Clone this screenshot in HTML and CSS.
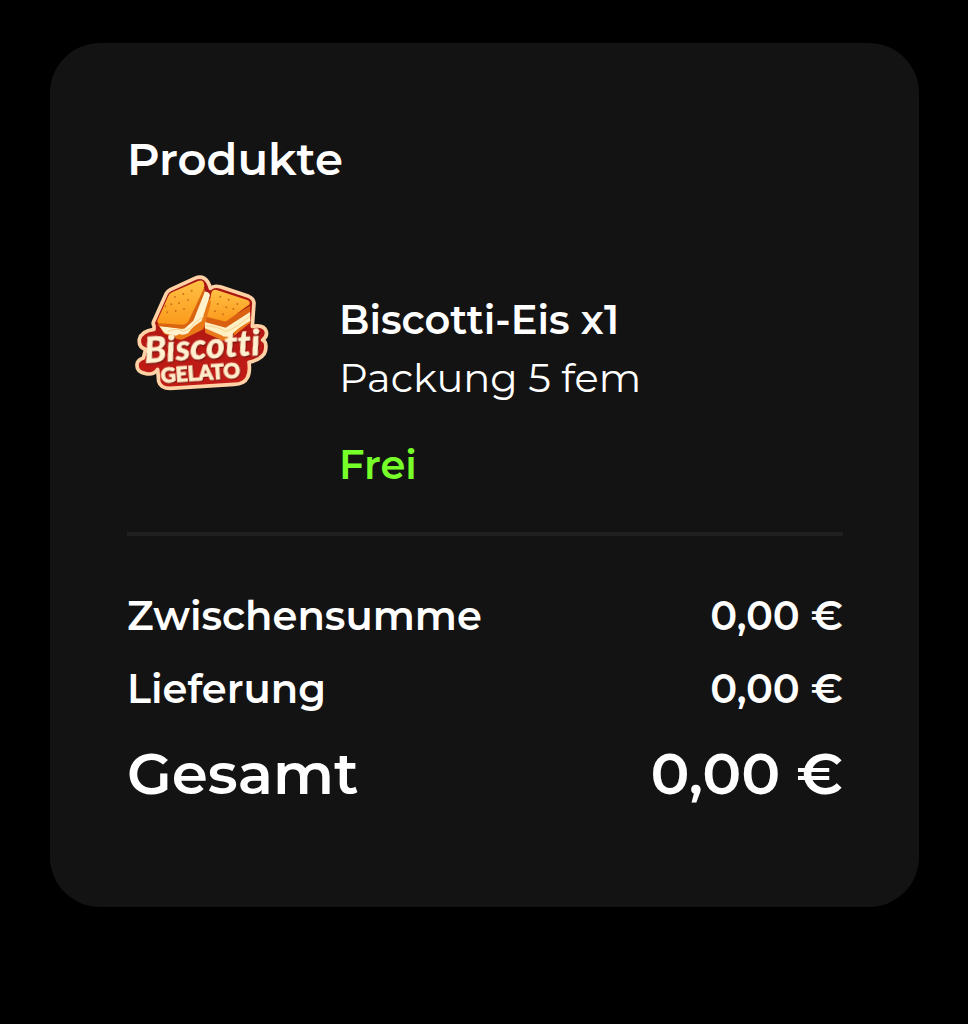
FILE: index.html
```html
<!DOCTYPE html>
<html lang="de">
<head>
<meta charset="utf-8">
<meta name="viewport" content="width=device-width, initial-scale=1">
<title>Produkte</title>
<link rel="stylesheet" href="styles.css">
</head>
<body>
<main class="card">
  <h1 class="title">Produkte</h1>
  <article class="item">
    <svg class="logo" viewBox="21 36 432 366" role="img" aria-label="Biscotti Gelato">
      <defs>
        <linearGradient id="top" x1="0" y1="0" x2="0" y2="1"><stop offset="0" stop-color="#ffc044"/><stop offset="1" stop-color="#fb9a1c"/></linearGradient>
        <linearGradient id="red" x1="0" y1="0" x2="0" y2="1"><stop offset="0" stop-color="#a51710"/><stop offset="1" stop-color="#c41c16"/></linearGradient>
        <path id="badge" d="M102 194 Q97 188 102 179 L139 97 Q143 90 151 86 L224 52 Q241 45 253 52 Q265 59 271 82 Q281 72 303 78 L386 106 Q401 112 402 126 L397 196 Q431 190 438 209 Q444 224 428 237 Q442 243 436 270 Q431 292 387 304 Q391 335 382 350 Q373 369 342 370 L151 382 Q121 382 116 361 L113 325 Q101 343 78 338 Q50 334 51 313 Q50 298 70 291 L77 265 Q55 259 58 235 Q64 210 102 205 Z"/>
      </defs>
      <use href="#badge" fill="url(#red)" stroke="#ffd2a6" stroke-width="11" stroke-linejoin="round"/>
      <path d="M253 188 L262 141 L390 164 L391 185 L326 237 Q310 243 300 235 L256 216 Z" fill="#e9791a"/>
      <path d="M254 180 Q284 184 316 197 L390 151 L391 180 Q355 199 332 224 Q317 232 303 222 L255 202 Z" fill="#fff0c4"/>
      <path d="M257 194 Q291 195 315 211 Q338 209 390 165" fill="none" stroke="#f5d08c" stroke-width="3"/>
      <path d="M315 180 L390 134 L390 153 L317 200 L257 184 L257 164 Z" fill="#d96110"/>
      <path d="M275 92 Q280 85 290 87 L384 118 Q391 122 389 130 L321 179 Q317 183 309 180 L259 167 Z" fill="url(#top)"/>
      <path d="M114 190 L143 116 L269 113 Q277 119 266 150 L250 205 L189 235 Q176 239 159 229 L132 218 Z" fill="#e97916"/>
      <path d="M118 195 L188 204 L251 91 Q269 93 270 103 L245 180 Q215 198 205 216 Q190 224 178 219 Q165 230 154 219 Q137 222 129 210 Z" fill="#fff2cc"/>
      <path d="M143 211 Q175 199 190 211 Q213 205 222 187 L251 167" fill="none" stroke="#f5d08c" stroke-width="3"/>
      <path d="M187 188 L247 78 Q257 77 253 96 L220 179 L193 203 L116 195 L112 181 Z" fill="#da6510"/>
      <path d="M145 105 Q148 97 156 94 L234 60 Q250 55 252 68 Q255 74 251 83 L207 177 Q201 190 188 191 L119 187 Q109 184 114 174 Z" fill="url(#top)"/>
      <g fill="#d0701a">
        <circle cx="165" cy="108" r="3"/><circle cx="190" cy="99" r="3"/><circle cx="215" cy="89" r="3"/>
        <circle cx="154" cy="130" r="3"/><circle cx="177" cy="126" r="3"/><circle cx="204" cy="117" r="3"/>
        <circle cx="142" cy="154" r="3"/><circle cx="167" cy="150" r="3"/><circle cx="192" cy="144" r="3"/>
        <circle cx="136" cy="136" r="3"/>
        <circle cx="301" cy="107" r="3"/><circle cx="326" cy="116" r="3"/><circle cx="352" cy="129" r="3"/>
        <circle cx="293" cy="129" r="3"/><circle cx="319" cy="139" r="3"/><circle cx="340" cy="144" r="3"/>
        <circle cx="285" cy="151" r="3"/><circle cx="309" cy="160" r="3"/>
      </g>
      <g transform="rotate(-4 80 313)">
        <text class="logo-script" x="76" y="306">Biscotti</text>
      </g>
      <g transform="rotate(-4 125 364)">
        <text class="logo-caps" x="124" y="366">GELATO</text>
      </g>
    </svg>
    <div class="details">
      <h2 class="name">Biscotti-Eis x1</h2>
      <p class="variant">Packung 5 fem</p>
      <p class="price">Frei</p>
    </div>
  </article>
  <dl class="totals">
    <div class="row"><dt>Zwischensumme</dt><dd>0,00 €</dd></div>
    <div class="row"><dt>Lieferung</dt><dd>0,00 €</dd></div>
    <div class="row grand"><dt>Gesamt</dt><dd>0,00 €</dd></div>
  </dl>
</main>
</body>
</html>
```
FILE: styles.css
```css
* {
  box-sizing: border-box;
  margin: 0;
}
body {
  padding: 43px 49px 43px 50px;
  background: #000;
  color: #fff;
  font-family: Montserrat, Inter, sans-serif;
  font-size: 40px;
}
.card {
  padding: 88px 76px 84px 77px;
  border-radius: 50px;
  background: #131313;
}
.title {
  font-size: 45px;
  font-weight: 600;
  line-height: 56px;
}
.item {
  display: flex;
  gap: 68px;
  margin-top: 86px;
}
.logo {
  flex: none;
  width: 144px;
  height: 122px;
}
.details {
  padding-top: 18px;
  line-height: 58px;
}
.name {
  font-size: 40px;
  font-weight: 600;
}
.variant {
  font-weight: 400;
}
.price {
  margin-top: 29px;
  color: #77ff29;
  font-weight: 600;
}
.totals {
  margin-top: 38px;
  padding-top: 43px;
  border-top: 4px solid #202020;
  font-weight: 600;
  line-height: 73px;
}
.row {
  display: flex;
  justify-content: space-between;
}
.grand {
  font-size: 58px;
  line-height: 98px;
}
.logo-script {
  fill: #fff0d0;
  stroke: #fff0d0;
  stroke-width: 1px;
  filter: drop-shadow(2px 4px 1px #7b100b);
  font-family: Lato, sans-serif;
  font-size: 108px;
  font-style: italic;
  font-weight: 900;
  font-variant-ligatures: none;
}
.logo-caps {
  fill: #ffedca;
  stroke: #ffedca;
  stroke-width: 3px;
  filter: drop-shadow(2px 3px 1px #7b100b);
  font-family: Lato, sans-serif;
  font-size: 62px;
  font-weight: 900;
}
```
